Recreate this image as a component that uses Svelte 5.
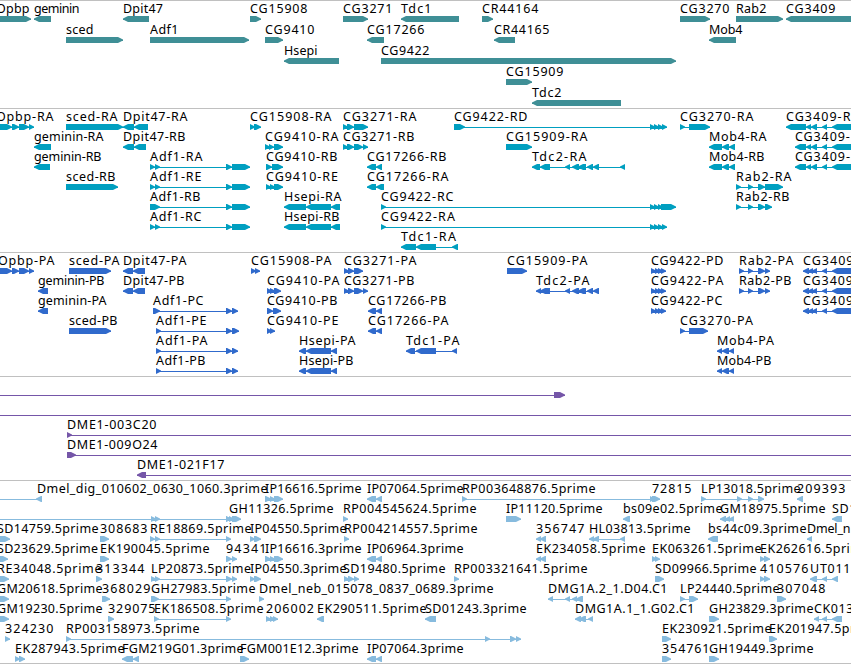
<script>
  const VIEW_WIDTH = 851;

  // exon layouts shared by several features
  const adf = [150, 155, 155, 160, 226, 232, 232, 250];
  const rd = [650, 655, 654, 659, 658, 663, 662, 667];
  const pd = [651, 656, 655, 660, 658, 663, 661, 666];
  const cg3409 = [795, 806, 806, 811, 811, 817, 822, 827, 832, 860];
  const cg3409p = [803, 809, 808, 813, 812, 817, 822, 827, 832, 860];
  const opbp = [-8, 12, 12, 19, 19, 29, 29, 34];
  const mob4 = [709, 722, 722, 729, 729, 735];
  const mob4p = [717, 722, 722, 729, 729, 734];
  const hsepi = [284, 306, 306, 331, 331, 340];
  const hsepip = [299, 306, 306, 331, 331, 337];
  const ip16616 = [265, 271, 270, 275, 274, 283];
  const rab2p = [739, 744, 748, 753, 758, 765, 765, 770];

  // row, label, label start, label end, strand, exons
  const genes = [
    [0, 'Opbp', -4, 29, '>', [-8, 31]],
    [0, 'geminin', 34, 79, '<', [34, 51]],
    [0, 'Dpit47', 123, 162.5, '<', [123, 149]],
    [0, 'CG15908', 250, 307, '>', [250, 261]],
    [0, 'CG3271', 343, 392, '>', [343, 368]],
    [0, 'Tdc1', 401, 431, '<', [401, 459]],
    [0, 'CR44164', 482, 538, '>', [482, 493]],
    [0, 'CG3270', 680, 729, '>', [680, 710]],
    [0, 'Rab2', 736, 766, '>', [736, 783]],
    [0, 'CG3409', 786, 835, '<', [786, 860]],
    [1, 'sced', 66, 93, '>', [66, 123]],
    [1, 'Adf1', 150, 178, '>', [150, 249]],
    [1, 'CG9410', 265, 314, '>', [265, 283]],
    [1, 'CG17266', 367, 424, '<', [367, 384]],
    [1, 'CR44165', 494, 549, '<', [494, 515]],
    [1, 'Mob4', 709, 742, '<', [709, 736]],
    [2, 'Hsepi', 284, 317, '<', [284, 339]],
    [2, 'CG9422', 381, 429, '>', [381, 676]],
    [3, 'CG15909', 506, 563, '>', [506, 532]],
    [4, 'Tdc2', 532, 561, '<', [532, 621]]
  ];

  const transcripts = [
    [0, 'Opbp-RA', -4, 53, '>', opbp],
    [0, 'sced-RA', 66, 117, '>', [66, 123]],
    [0, 'Dpit47-RA', 123, 187, '<', [123, 134, 134, 148]],
    [0, 'CG15908-RA', 250, 331, '>', [250, 255, 254, 261]],
    [0, 'CG3271-RA', 343, 416, '>', [343, 348, 347, 354, 354, 368]],
    [0, 'CG9422-RD', 454, 527, '>', [454, 465, ...rd]],
    [0, 'CG3270-RA', 680, 753, '>', [680, 685, 689, 710]],
    [0, 'CG3409-RA', 786, 859, '<', [786, 806, 806, 811, 811, 817, 822, 827, 832, 860]],
    [1, 'geminin-RA', 34, 103, '<', [34, 51]],
    [1, 'Dpit47-RB', 123, 185, '<', [123, 134, 134, 146]],
    [1, 'CG9410-RA', 265, 338, '>', [265, 270, 269, 274, 274, 283]],
    [1, 'CG3271-RB', 343, 414, '>', [343, 348, 347, 354, 354, 363, 363, 368]],
    [1, 'CG15909-RA', 506, 587, '>', [506, 532]],
    [1, 'Mob4-RA', 709, 766, '<', mob4],
    [1, 'CG3409-RB', 795, 867, '<', cg3409],
    [2, 'geminin-RB', 34, 101, '<', [34, 50]],
    [2, 'Adf1-RA', 150, 202, '>', adf],
    [2, 'CG9410-RB', 266, 337, '>', [266, 272, 272, 283]],
    [2, 'CG17266-RB', 367, 446, '<', [367, 376, 376, 382]],
    [2, 'Tdc2-RA', 532, 586, '<', [532, 540, 540, 550, 565, 570, 572, 579, 578, 586, 587, 593, 593, 599, 620, 625]],
    [2, 'Mob4-RB', 709, 764, '<', mob4],
    [2, 'CG3409-RC', 795, 867, '<', cg3409],
    [3, 'sced-RB', 66, 115, '>', [66, 118]],
    [3, 'Adf1-RE', 150, 201, '>', adf],
    [3, 'CG9410-RE', 266, 337.5, '>', [266, 271, 270, 275, 274, 283]],
    [3, 'CG17266-RA', 367, 448, '<', [367, 376, 376, 384]],
    [3, 'Rab2-RA', 736, 791, '>', [736, 741, 748, 753, 758, 765, 765, 783]],
    [4, 'Adf1-RB', 150, 200, '>', [150, 160, 226, 232, 232, 250]],
    [4, 'Hsepi-RA', 284, 341, '<', hsepi],
    [4, 'CG9422-RC', 381, 453, '>', [381, 386, 650, 655, 654, 659, 658, 663, 661, 676]],
    [4, 'Rab2-RB', 736, 789, '>', [736, 741, 748, 753, 758, 765, 765, 772]],
    [5, 'Adf1-RC', 150, 201, '>', adf],
    [5, 'Hsepi-RB', 284, 339, '<', hsepi],
    [5, 'CG9422-RA', 381, 454.5, '>', [381, 386, ...rd]],
    [6, 'Tdc1-RA', 401, 455.5, '<', [401, 416, 416, 436, 452, 458]]
  ];

  const proteins = [
    [0, 'Opbp-PA', -2, 54, '>', opbp],
    [0, 'sced-PA', 69, 119, '>', [69, 111]],
    [0, 'Dpit47-PA', 123, 186, '<', [123, 133, 133, 145]],
    [0, 'CG15908-PA', 251, 331, '>', [251, 256, 255, 260]],
    [0, 'CG3271-PA', 344, 416, '>', [344, 349, 348, 354, 354, 363]],
    [0, 'CG15909-PA', 507, 587, '>', [507, 527]],
    [0, 'CG9422-PD', 651, 723, '>', pd],
    [0, 'Rab2-PA', 739, 793, '>', rab2p],
    [0, 'CG3409-PA', 803, 875, '<', cg3409p],
    [1, 'geminin-PB', 38, 104, '<', [38, 48]],
    [1, 'Dpit47-PB', 123, 184, '<', [123, 133, 133, 145]],
    [1, 'CG9410-PA', 267, 339, '>', [267, 272, 270, 275, 274, 281]],
    [1, 'CG3271-PB', 344, 414, '>', [344, 349, 348, 354, 354, 363, 363, 368]],
    [1, 'Tdc2-PA', 536, 589, '<', [536, 541, 540, 550, 565, 570, 572, 579, 578, 586, 587, 593, 593, 599]],
    [1, 'CG9422-PA', 651, 723, '>', pd],
    [1, 'Rab2-PB', 739, 791, '>', rab2p],
    [1, 'CG3409-PB', 803, 875, '<', cg3409p],
    [2, 'geminin-PA', 38, 106, '<', [38, 48]],
    [2, 'Adf1-PC', 153, 203, '>', [153, 160, 226, 232, 232, 238]],
    [2, 'CG9410-PB', 267, 337, '>', [267, 273, 273, 281]],
    [2, 'CG17266-PB', 368, 446, '<', [368, 376, 376, 382]],
    [2, 'CG9422-PC', 651, 722, '>', pd],
    [2, 'CG3409-PC', 803, 875, '<', cg3409p],
    [3, 'sced-PB', 69, 117, '>', [69, 111]],
    [3, 'Adf1-PE', 156, 206, '>', [156, 161, 226, 232, 232, 239]],
    [3, 'CG9410-PE', 267, 338, '>', [267, 272, 270, 275]],
    [3, 'CG17266-PA', 368, 448, '<', [368, 376, 376, 382]],
    [3, 'CG3270-PA', 680, 752.5, '>', [680, 685, 689, 708]],
    [4, 'Adf1-PA', 156, 207, '>', [156, 161, 226, 232, 232, 238]],
    [4, 'Hsepi-PA', 299, 355, '<', hsepip],
    [4, 'Tdc1-PA', 406, 459, '<', [406, 415, 416, 436, 452, 457]],
    [4, 'Mob4-PA', 717, 773.5, '<', mob4p],
    [5, 'Adf1-PB', 156, 205, '>', [156, 161, 226, 232, 232, 238]],
    [5, 'Hsepi-PB', 299, 353, '<', hsepip],
    [5, 'Mob4-PB', 717, 771, '<', mob4p]
  ];

  const bacs = [
    [0, '', 0, 0, '>', [-20, -10, 554, 565]],
    [1, '', 0, 0, '>', [-20, -10, 870, 880]],
    [2, 'DME1-003C20', 67, 156, '>', [67, 72, 870, 880]],
    [3, 'DME1-009O24', 67, 157, '>', [67, 76, 870, 880]],
    [4, 'DME1-021F17', 137, 224, '<', [137, 146, 870, 880]]
  ];

  const ests = [
    [0, 'Dmel_dig_010602_0630_1060.3prime', 37, 267, '<', [-20, -10, 36, 42]],
    [0, 'IP16616.5prime', 265, 361, '>', ip16616],
    [0, 'IP07064.5prime', 367, 463, '<', [367, 376, 376, 382]],
    [0, 'RP003648876.5prime', 462, 595, '>', [462, 467, 650, 655, 653, 658]],
    [0, '72815', 652, 691, '>', [652, 660]],
    [0, 'LP13018.5prime', 701, 800, '>', [701, 706, 737, 742, 748, 753, 758, 764]],
    [0, '209393', 797, 845, '<', [797, 803]],
    [1, '', 0, 0, '>', [-20, -10, 151, 156, 155, 160, 226, 231]],
    [1, 'GH11326.5prime', 229, 333, '>', [226, 231, 229, 234, 232, 241]],
    [1, 'RP004545624.5prime', 343, 476, '>', [343, 348]],
    [1, 'IP11120.5prime', 506, 602, '>', [506, 521]],
    [1, 'bs09e02.5prime', 623, 722, '<', [623, 630]],
    [1, 'GM18975.5prime', 720, 825, '<', [720, 726, 725, 730, 729, 734]],
    [1, 'SD1', 832, 856, '<', [832, 842]],
    [2, 'SD14759.5prime', -3, 98, '>', [-8, 10]],
    [2, '308683', 100, 147, '>', [100, 109]],
    [2, 'RE18869.5prime', 150, 251, '>', [150, 155, 155, 160, 226, 231]],
    [2, 'IP04550.5prime', 250, 346, '>', [250, 255, 254, 261]],
    [2, 'RP004214557.5prime', 344, 477, '>', [344, 349]],
    [2, '356747', 536, 584, '<', [536, 541, 540, 546]],
    [2, 'HL03813.5prime', 589, 690, '<', [589, 594, 593, 599, 620, 625]],
    [2, 'bs44c09.3prime', 708, 806, '<', [708, 718]],
    [2, 'Dmel_n', 807, 850, '<', [807, 812]],
    [3, 'SD23629.5prime', -3, 97.5, '>', [-8, 8]],
    [3, 'EK190045.5prime', 100, 209, '>', [100, 109]],
    [3, '94341', 226, 266, '>', [226, 232, 232, 237]],
    [3, 'IP16616.3prime', 265, 361, '>', ip16616],
    [3, 'IP06964.3prime', 367, 463, '<', [367, 376, 376, 382]],
    [3, 'EK234058.5prime', 536, 645, '<', [536, 541, 540, 546]],
    [3, 'EK063261.5prime', 652, 761, '>', [652, 657, 655, 660]],
    [3, 'EK262616.5prime', 760, 869, '>', [760, 765, 764, 770]],
    [4, 'RE34048.5prime', -3, 101, '>', [-8, 9]],
    [4, '313344', 96, 144, '>', [96, 102]],
    [4, 'LP20873.5prime', 151, 250.5, '>', [151, 156, 155, 160, 226, 232, 232, 237]],
    [4, 'IP04550.3prime', 250, 346, '>', [250, 255, 254, 261]],
    [4, 'SD19480.5prime', 343, 445, '>', [344, 349, 348, 354, 354, 359]],
    [4, 'RP003321641.5prime', 454, 587, '>', [454, 459]],
    [4, 'SD09966.5prime', 655, 756, '>', [655, 664]],
    [4, '410576', 760, 808, '>', [760, 765, 764, 770]],
    [4, 'UT011', 810, 850, '<', [810, 817, 822, 827, 832, 838]],
    [5, 'GM20618.5prime', -3, 102, '>', [-8, 9]],
    [5, '368029', 102, 150, '>', [102, 110]],
    [5, 'GH27983.5prime', 151, 255, '>', [151, 159, 226, 231]],
    [5, 'Dmel_neb_015078_0837_0689.3prime', 259, 493, '>', [259, 264]],
    [5, 'DMG1A.2_1.D04.C1', 548, 667, '<', [548, 553, 565, 570, 572, 577, 576, 583]],
    [5, 'LP24440.5prime', 680, 779, '>', [680, 685, 689, 698]],
    [5, '307048', 777, 825, '>', [777, 786]],
    [6, 'GM19230.5prime', -3, 102, '>', [-8, 9]],
    [6, '329075', 108, 155, '>', [108, 114]],
    [6, 'EK186508.5prime', 154, 263, '>', [154, 159, 226, 231]],
    [6, '206002', 266, 313.5, '>', [266, 271, 270, 275, 273, 278]],
    [6, 'EK290511.5prime', 317, 426, '<', [317, 324]],
    [6, 'SD01243.3prime', 425, 526, '<', [425, 436]],
    [6, 'DMG1A.1_1.G02.C1', 575, 694, '<', [575, 581, 579, 586, 588, 593]],
    [6, 'GH23829.3prime', 709, 813, '>', [709, 719]],
    [6, 'CK013', 814, 853, '<', [814, 819, 822, 827, 832, 842]],
    [7, '324230', 5, 53, '>', [5, 10]],
    [7, 'RP003158973.5prime', 66, 199, '>', [66, 71, 485, 490, 510, 516, 516, 521]],
    [7, 'EK230921.5prime', 662, 771, '>', [662, 671]],
    [7, 'EK201947.5prime', 769, 878, '>', [769, 777]],
    [8, 'EK287943.5prime', 15, 124, '>', [15, 20, 19, 25]],
    [8, 'FGM219G01.3prime', 122, 243, '<', [122, 133, 133, 139]],
    [8, 'FGM001E12.3prime', 240, 358, '>', [240, 249]],
    [8, 'IP07064.3prime', 367, 463, '<', [367, 376, 376, 382]],
    [8, '354761', 662, 709, '>', [662, 671]],
    [8, 'GH19449.3prime', 709, 813, '>', [709, 719]]
  ];

  const tracks = [
    { name: 'genes', height: 107, pitch: 21, features: genes },
    { name: 'transcripts', height: 143, pitch: 20, features: transcripts },
    { name: 'proteins', height: 123, pitch: 20, features: proteins },
    { name: 'bacs', height: 103, pitch: 20, features: bacs },
    { name: 'ests', height: 182, pitch: 20, features: ests }
  ];

  // one arrow-headed block per exon, pointing along the strand
  function exonPath(exons, strand, top) {
    let d = '';
    for (let i = 0; i < exons.length; i += 2) {
      const a = exons[i];
      const b = exons[i + 1];
      const tip = Math.min(5, b - a);
      if (strand === '>') {
        d += `M${a} ${top}H${b - tip}L${b} ${top + 2.5}V${top + 3.5}L${b - tip} ${top + 6}H${a}Z`;
      } else {
        d += `M${b} ${top}H${a + tip}L${a} ${top + 2.5}V${top + 3.5}L${a + tip} ${top + 6}H${b}Z`;
      }
    }
    return d;
  }
</script>

<main class="browser">
  {#each tracks as track (track.name)}
    <section class="track {track.name}">
      <svg width={VIEW_WIDTH} height={track.height}>
        {#each track.features as [row, label, start, end, strand, exons]}
          {@const top = row * track.pitch + 15}
          {@const first = exons[0]}
          {@const last = exons[exons.length - 1]}
          <rect class="intron" x={first} y={top + 3} width={last - first} height="1" />
          <path class="exon" d={exonPath(exons, strand, top)} />
          {#if label}
            <text x={start} y={top - 3} textLength={end - start + 0.5}>{label}</text>
          {/if}
        {/each}
      </svg>
    </section>
  {/each}
</main>

<style>
  :global(body) {
    margin: 0;
    background: #fff;
  }

  .browser {
    width: 851px;
    height: 664px;
    box-sizing: border-box;
    overflow: hidden;
    background: #fff;
    border-bottom: 1px solid #c0c0c0;
  }

  .track {
    border-top: 1px solid #c0c0c0;
  }

  svg {
    display: block;
    fill: var(--track-color);
  }

  .intron {
    shape-rendering: crispEdges;
  }

  text {
    fill: #000;
    font-family: 'Noto Sans', 'DejaVu Sans', sans-serif;
    font-size: 12.5px;
  }

  .genes {
    --track-color: #3f8f96;
  }

  .transcripts {
    --track-color: #009fc0;
  }

  .proteins {
    --track-color: #306acc;
  }

  .bacs {
    --track-color: #7556a8;
  }

  .ests {
    --track-color: #87bbde;
  }
</style>
